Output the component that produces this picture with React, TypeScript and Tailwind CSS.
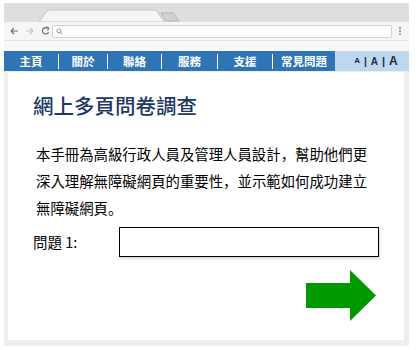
import React from "react";

const navItems: { label: string; w: string }[] = [
  { label: "主頁", w: "w-[54px]" },
  { label: "關於", w: "w-[48px]" },
  { label: "聯絡", w: "w-[53px]" },
  { label: "服務", w: "w-[55px]" },
  { label: "支援", w: "w-[54px]" },
  { label: "常見問題", w: "w-[62px]" },
];

function P({ c }: { c: string }) {
  return <span className="font-['Noto_Sans_CJK_SC',sans-serif]">{c}</span>;
}

export default function App() {
  return (
    <div className="w-[417px] h-[350px] bg-white pt-[3px] pl-[4px] font-['Noto_Sans_CJK_TC',sans-serif] overflow-hidden">
      <div className="w-[405px] h-[343px] flex flex-col">
        {/* tab strip */}
        <div className="h-[19px] bg-[#dedede] shrink-0">
          <svg width="405" height="19" viewBox="0 0 405 19">
            <path
              d="M35 19 L43 8 Q44 7 46 7 L150 7 Q152 7 153 8 L160 19 Z"
              fill="#f6f6f6"
              stroke="#c4c4c4"
              strokeWidth="1"
            />
            <path d="M157 10 L169 10 L175 18 L162 18 Z" fill="#d2d2d2" stroke="#b4b4b4" strokeWidth="1" />
          </svg>
        </div>
        {/* toolbar */}
        <div className="h-[19px] bg-[#f6f6f6] border-b border-[#e4e4e4] flex items-center shrink-0">
          <svg width="44" height="12" viewBox="0 0 44 12" className="ml-[5px]">
            <path d="M2 6 L9 6 M2 6 L5 3 M2 6 L5 9" stroke="#6e6e6e" strokeWidth="1.2" fill="none" />
            <path d="M17 6 L24 6 M24 6 L21 3 M24 6 L21 9" stroke="#c2c2c2" strokeWidth="1.2" fill="none" />
            <path d="M38.5 3.2 A3.2 3.2 0 1 0 39.6 7" stroke="#6e6e6e" strokeWidth="1.2" fill="none" />
            <path d="M37 1.8 L39.8 3 L38.6 5.6" stroke="#6e6e6e" strokeWidth="1.1" fill="none" />
          </svg>
          <div className="ml-[-1px] w-[340px] h-[13px] bg-white border border-[#d2d2d2] rounded-[2px] flex items-center pl-[3px]">
            <svg width="7" height="7" viewBox="0 0 7 7">
              <circle cx="2.8" cy="2.8" r="2" stroke="#8a8a8a" strokeWidth="0.9" fill="none" />
              <path d="M4.3 4.3 L6.3 6.3" stroke="#8a8a8a" strokeWidth="1" />
            </svg>
          </div>
          <div className="ml-[7px] flex flex-col gap-[1.5px]">
            <span className="w-[1.5px] h-[1.5px] bg-[#a5a5a5]" />
            <span className="w-[1.5px] h-[1.5px] bg-[#a5a5a5]" />
            <span className="w-[1.5px] h-[1.5px] bg-[#a5a5a5]" />
          </div>
        </div>
        <div className="h-[10px] bg-[#f8f8f8] shrink-0" />
        {/* nav */}
        <div className="h-[20px] flex shrink-0">
          <div className="flex items-center bg-[#2e75b6] h-full">
            {navItems.map((it, i) => (
              <React.Fragment key={it.label}>
                {i > 0 && <span className="w-px h-[15px] bg-white" />}
                <span
                  className={`${it.w} text-center text-white text-[11.5px] font-bold leading-[20px]`}
                >
                  {it.label}
                </span>
              </React.Fragment>
            ))}
          </div>
          <div className="flex-1 bg-[#bdd7ee] flex items-center justify-center pl-[8px] font-['Liberation_Sans',sans-serif] font-bold text-[#1b2a44]">
            <span className="text-[8px]">A</span>
            <span className="text-[10px] mx-[4px]">|</span>
            <span className="text-[10px]">A</span>
            <span className="text-[11px] mx-[4px]">|</span>
            <span className="text-[12px]">A</span>
          </div>
        </div>
        {/* content frame */}
        <div className="flex-1 bg-[#eeeeee] pl-[4px] pr-[5px] pt-[1px] pb-[6px]">
          <div className="h-full bg-white flex flex-col pl-[25px]">
            <h1 className="pt-[19px] text-[20.5px] leading-[28px] text-[#203864] font-medium">
              網上多頁問卷調查
            </h1>
            <div className="mt-[21px] ml-[3px] text-[14.4px] leading-[27px] text-black">
              <div className="whitespace-nowrap">
                本手冊為高級行政人員及管理人員設計<P c="，" />幫助他們更
              </div>
              <div className="whitespace-nowrap">
                深入理解無障礙網頁的重要性<P c="，" />並示範如何成功建立
              </div>
              <div className="whitespace-nowrap">
                無障礙網頁<P c="。" />
              </div>
            </div>
            <div className="mt-[6px] flex items-center">
              <label className="w-[86px] text-[14.5px] text-black">問題 1:</label>
              <div className="w-[260px] h-[30px] border border-black bg-white shadow-[1px_2px_2px_rgba(0,0,0,0.15)]" />
            </div>
            <div className="mt-[13px] flex justify-end pr-[28px]">
              <svg width="70" height="51" viewBox="0 0 70 51">
                <polygon points="0,13 44,13 44,0 70,25.5 44,51 44,38 0,38" fill="#009900" />
              </svg>
            </div>
          </div>
        </div>
      </div>
    </div>
  );
}
